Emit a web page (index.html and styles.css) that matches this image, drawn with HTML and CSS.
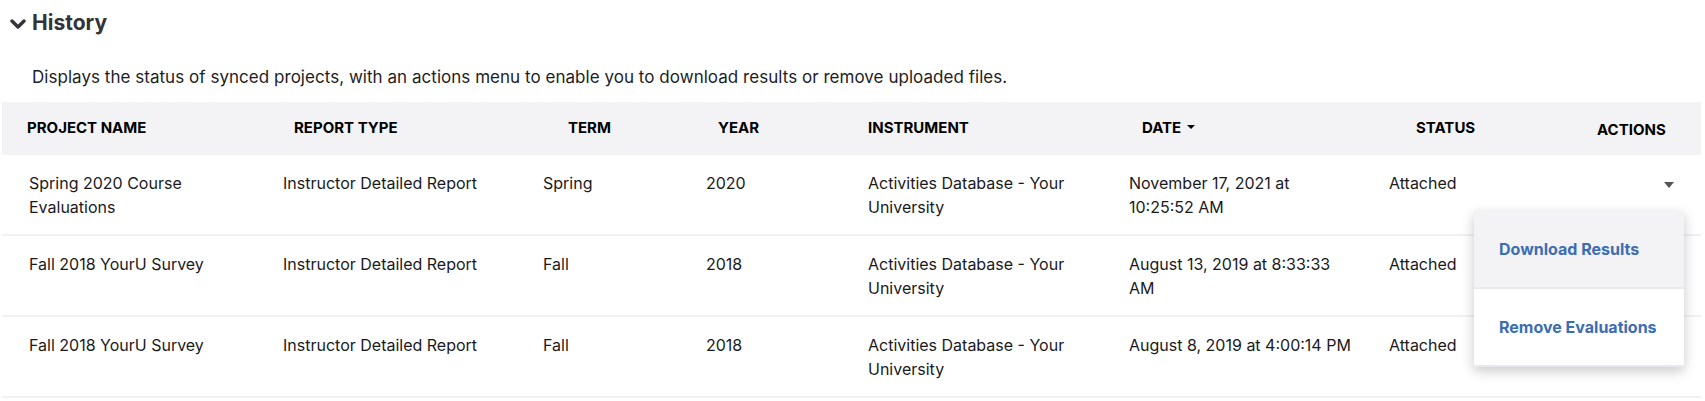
FILE: index.html
```html
<!DOCTYPE html>
<html lang="en">
<head>
    <meta charset="UTF-8">
    <meta name="viewport" content="width=device-width, initial-scale=1.0">
    <title>History</title>
    <link rel="stylesheet" href="styles.css">
</head>
<body>
    <section class="history">
        <h2 class="history-title">
            <svg class="chevron" width="16" height="10" viewBox="0 0 16 10" aria-hidden="true">
                <path d="M2 2 L8 8 L14 2" fill="none" stroke="#333338" stroke-width="3.4" stroke-linecap="round" stroke-linejoin="round"/>
            </svg>
            History
        </h2>

        <p class="history-desc">Displays the status of synced projects, with an actions menu to enable you to download results or remove uploaded files.</p>

        <div class="table-wrap">
            <table class="history-table">
                <colgroup>
                    <col class="w-name">
                    <col class="w-type">
                    <col class="w-term">
                    <col class="w-year">
                    <col class="w-instrument">
                    <col class="w-date">
                    <col class="w-status">
                    <col class="w-actions">
                </colgroup>
                <thead>
                    <tr>
                        <th class="col-name">PROJECT NAME</th>
                        <th class="col-type">REPORT TYPE</th>
                        <th class="col-term">TERM</th>
                        <th class="col-year">YEAR</th>
                        <th class="col-instrument">INSTRUMENT</th>
                        <th class="col-date">DATE <span class="sort-caret"></span></th>
                        <th class="col-status">STATUS</th>
                        <th class="col-actions">ACTIONS</th>
                    </tr>
                </thead>
                <tbody>
                    <tr>
                        <td>Spring 2020 Course Evaluations</td>
                        <td>Instructor Detailed Report</td>
                        <td>Spring</td>
                        <td>2020</td>
                        <td>Activities Database - Your University</td>
                        <td class="col-date">November 17, 2021 at 10:25:52 AM</td>
                        <td>Attached</td>
                        <td class="col-actions"><span class="menu-caret"></span></td>
                    </tr>
                    <tr>
                        <td>Fall 2018 YourU Survey</td>
                        <td>Instructor Detailed Report</td>
                        <td>Fall</td>
                        <td>2018</td>
                        <td>Activities Database - Your University</td>
                        <td class="col-date">August 13, 2019 at 8:33:33 AM</td>
                        <td>Attached</td>
                        <td class="col-actions"></td>
                    </tr>
                    <tr>
                        <td>Fall 2018 YourU Survey</td>
                        <td>Instructor Detailed Report</td>
                        <td>Fall</td>
                        <td>2018</td>
                        <td>Activities Database - Your University</td>
                        <td class="col-date">August 8, 2019 at 4:00:14 PM</td>
                        <td>Attached</td>
                        <td class="col-actions"></td>
                    </tr>
                </tbody>
            </table>

            <ul class="actions-menu">
                <li class="active">Download Results</li>
                <li>Remove Evaluations</li>
            </ul>
        </div>
    </section>
</body>
</html>
```

FILE: styles.css
```css
* {
    margin: 0;
    padding: 0;
    box-sizing: border-box;
}

body {
    font-family: Inter, 'Noto Sans', sans-serif;
    background: #fff;
    color: #1d1d1f;
}

.history-title {
    display: flex;
    align-items: center;
    gap: 6px;
    margin: 8px 0 0 10px;
    font-size: 21px;
    line-height: 30px;
    font-weight: 700;
    color: #333338;
}

.chevron {
    margin-top: 1px;
}

.history-desc {
    margin-top: 27px;
    padding-left: 32px;
    font-size: 17px;
    line-height: 24px;
    letter-spacing: 0.035px;
    color: #1d1d1f;
}

.table-wrap {
    position: relative;
    margin: 13px 4px 0 2px;
}

.history-table {
    width: 100%;
    border-collapse: collapse;
    table-layout: fixed;
}

.w-name { width: 254px; }
.w-type { width: 260px; }
.w-term { width: 163px; }
.w-year { width: 162px; }
.w-instrument { width: 261px; }
.w-date { width: 260px; }
.w-status { width: 208px; }
.w-actions { width: 131px; }

.history-table thead tr {
    background: #f3f3f5;
}

.history-table th {
    height: 53px;
    padding: 16px 10px 17px 27px;
    text-align: left;
    vertical-align: top;
    font-size: 15px;
    line-height: 20px;
    font-weight: 700;
    color: #000;
    white-space: nowrap;
}

.history-table th.col-name { padding-left: 25px; }
.history-table th.col-type { padding-left: 38px; }
.history-table th.col-term { padding-left: 52px; }
.history-table th.col-year { padding-left: 39px; }
.history-table th.col-instrument { padding-left: 27px; }
.history-table th.col-date { padding-left: 40px; }
.history-table th.col-status { padding-left: 54px; }

.history-table th.col-actions {
    padding-top: 18px;
    padding-bottom: 15px;
    padding-right: 37px;
    text-align: right;
}

.sort-caret {
    display: inline-block;
    width: 0;
    height: 0;
    margin-left: 2px;
    vertical-align: 4px;
    border-left: 4px solid transparent;
    border-right: 4px solid transparent;
    border-top: 4px solid #000;
}

.history-table td {
    padding: 16px 20px 15px 27px;
    vertical-align: top;
    font-size: 16px;
    line-height: 24px;
    color: #1a1a1c;
}

.history-table tbody tr {
    border-bottom: 2px solid #f1f1f3;
}

.history-table td.col-date {
    padding-right: 4px;
}

.history-table td.col-actions {
    padding-right: 27px;
    text-align: right;
}

.menu-caret {
    display: inline-block;
    width: 0;
    height: 0;
    margin-top: 11px;
    vertical-align: top;
    border-left: 5.5px solid transparent;
    border-right: 5.5px solid transparent;
    border-top: 6px solid #555;
}

.actions-menu {
    position: absolute;
    top: 109px;
    left: 1472px;
    width: 210px;
    list-style: none;
    background: #fff;
    box-shadow: 0 4px 12px rgba(0, 0, 0, 0.22);
}

.actions-menu li {
    height: 78px;
    padding-left: 25px;
    display: flex;
    align-items: center;
    border-bottom: 2px solid #e9e9ed;
    font-size: 16px;
    font-weight: 700;
    color: #3b6db4;
    cursor: pointer;
}

.actions-menu li.active {
    background: #f3f3f5;
}
```
